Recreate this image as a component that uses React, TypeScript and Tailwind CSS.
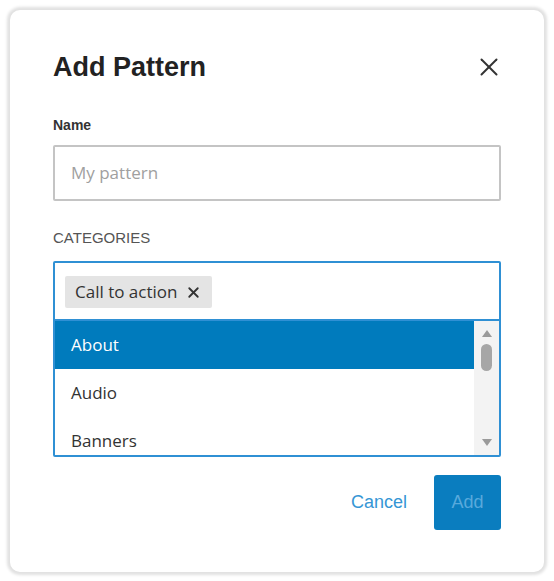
import { X } from "lucide-react";

const options = ["About", "Audio", "Banners"];

export default function App() {
  return (
    <div className="w-[554px] h-[581px] bg-white p-[10px] font-['Liberation_Sans',Arial,sans-serif]">
      <div className="h-[562px] w-[534px] rounded-[10px] bg-white shadow-[0_0_3px_3px_rgba(0,0,0,0.12)] px-[43px] pt-[43px]">
        {/* Header */}
        <div className="flex items-center justify-between h-[28px]">
          <h2 className="text-[27px] leading-[28px] font-bold text-[#222]">Add Pattern</h2>
          <button className="w-[34px] h-[34px] flex items-center justify-center -mr-[5px] text-[#333]">
            <X className="w-[30px] h-[30px]" strokeWidth={1.6} />
          </button>
        </div>

        {/* Name */}
        <label className="block mt-[36px] text-[14px] leading-[16px] font-bold text-[#333]">Name</label>
        <div className="mt-[12px] h-[56px] border-2 border-[#c4c4c4] rounded-[2px] flex items-center px-[16px]">
          <span className="text-[17px] text-[#a0a0a0] font-['Open_Sans',sans-serif]">My pattern</span>
        </div>

        {/* Categories */}
        <div className="mt-[29px] text-[15px] leading-[16px] text-[#555] uppercase">Categories</div>
        <div className="mt-[15px] border-2 border-[#2f90d4] rounded-[2px] font-['Open_Sans',sans-serif]">
          <div className="h-[56px] px-[10px] pt-[13px]">
            <span className="inline-flex items-center gap-[8px] h-[32px] px-[10px] bg-[#e4e4e4] rounded-[2px] text-[17px] text-[#333]">
              Call to action
              <X className="w-[17px] h-[17px]" strokeWidth={2.6} />
            </span>
          </div>
          <div className="h-[2px] bg-[#2f90d4]" />
          <div className="flex h-[134px] overflow-hidden">
            <ul className="flex-1">
              {options.map((o, i) => (
                <li
                  key={o}
                  className={`h-[48px] flex items-center px-[16px] text-[17px] ${
                    i === 0 ? "bg-[#007bbd] text-white" : "text-[#333]"
                  }`}
                >
                  {o}
                </li>
              ))}
            </ul>
            {/* Scrollbar */}
            <div className="w-[25px] bg-[#f3f3f3] flex flex-col items-center justify-between py-[8px]">
              <div className="flex flex-col items-center gap-[6px]">
                <svg width="12" height="9" viewBox="0 0 12 9">
                  <path d="M6 1 L11 8 L1 8 Z" fill="#9a9a9a" />
                </svg>
                <div className="w-[11px] h-[27px] rounded-full bg-[#a6a6a6]" />
              </div>
              <svg width="12" height="9" viewBox="0 0 12 9">
                <path d="M1 1 L11 1 L6 8 Z" fill="#9a9a9a" />
              </svg>
            </div>
          </div>
        </div>

        {/* Footer */}
        <div className="mt-[18px] flex items-center justify-end gap-[27px]">
          <button className="text-[18px] text-[#3596d5]">Cancel</button>
          <button className="w-[67px] h-[55px] rounded-[3px] bg-[#0a7dbf] text-[18px] text-[#58a9dc]">Add</button>
        </div>
      </div>
    </div>
  );
}
